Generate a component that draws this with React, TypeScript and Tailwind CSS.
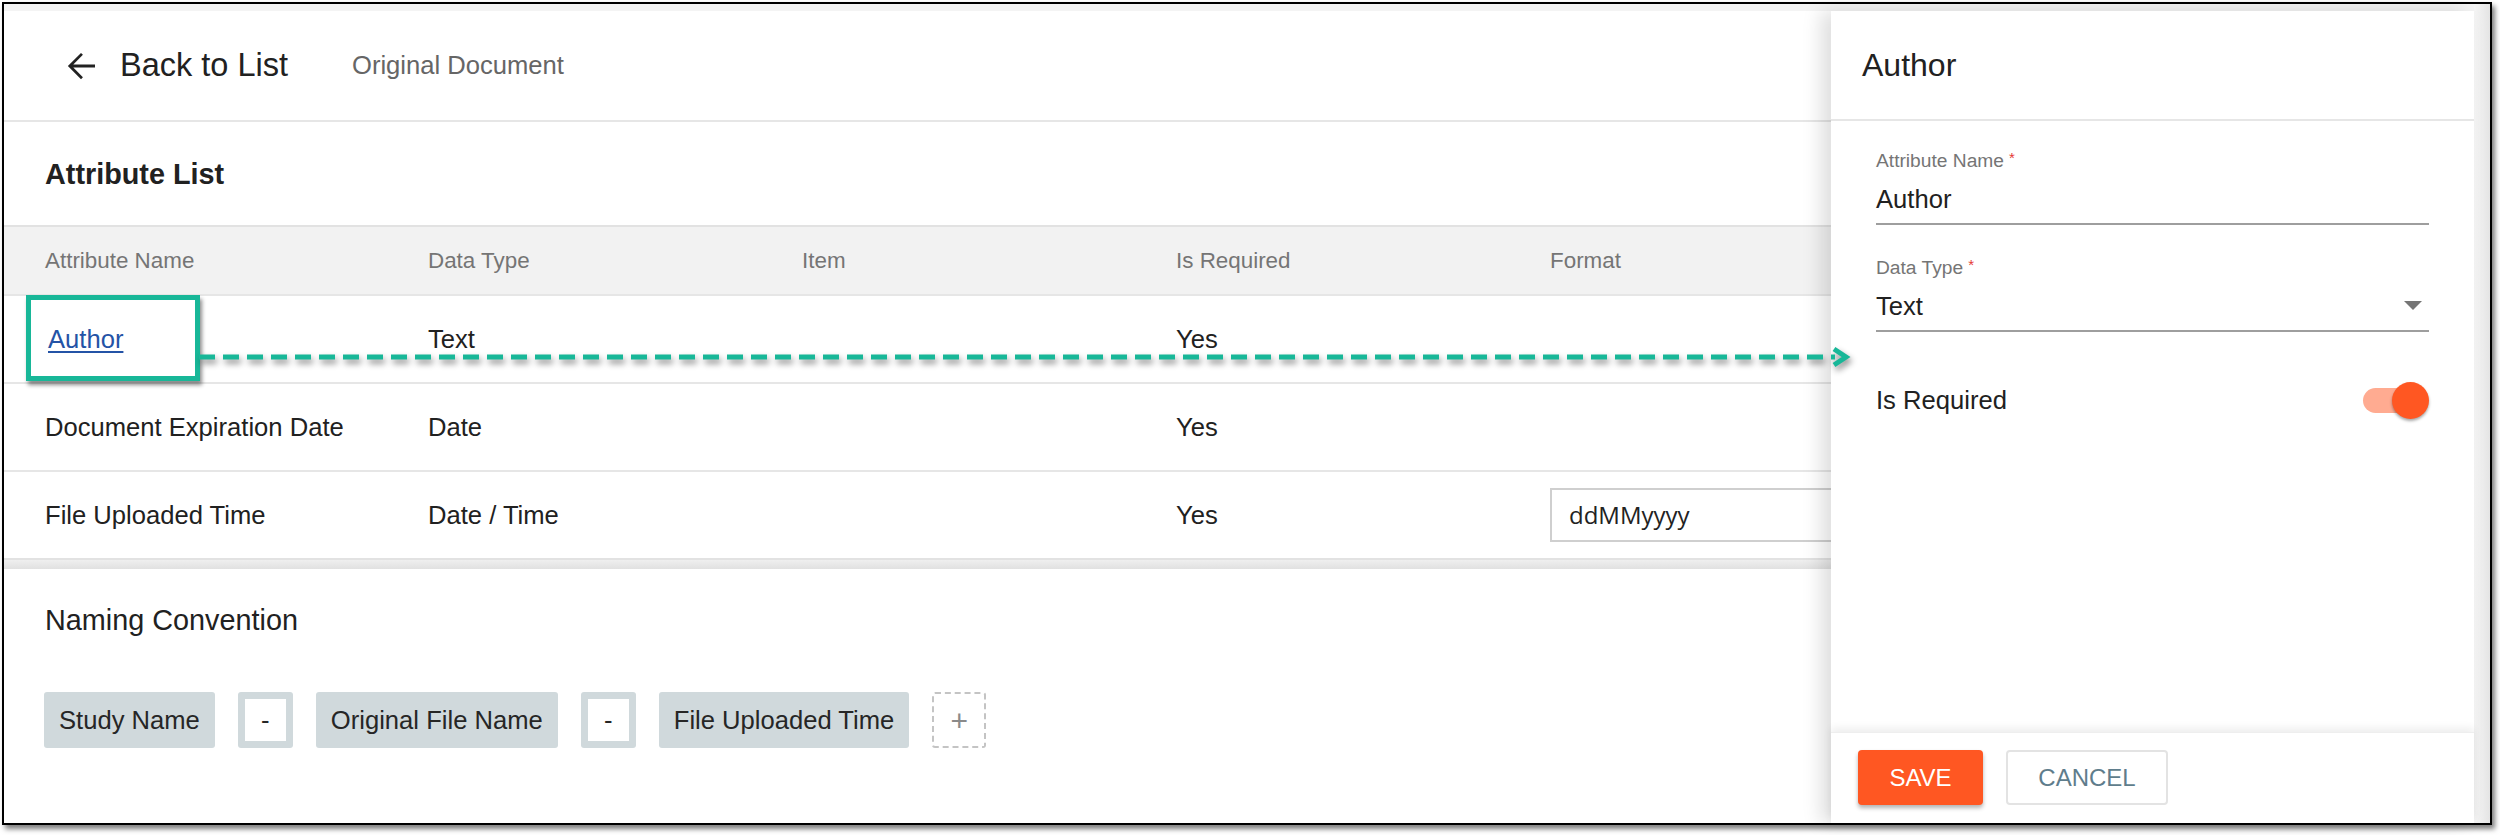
import React from 'react';

const FONT = { fontFamily: '"Liberation Sans", Arial, Helvetica, sans-serif' };

const columns = ['Attribute Name', 'Data Type', 'Item', 'Is Required', 'Format'];

const rows = [
  { name: 'Author', type: 'Text', required: 'Yes', link: true },
  { name: 'Document Expiration Date', type: 'Date', required: 'Yes' },
  { name: 'File Uploaded Time', type: 'Date / Time', required: 'Yes', format: 'ddMMyyyy' },
];

const colWidths = ['w-[383px]', 'w-[374px]', 'w-[374px]', 'w-[374px]'];

function ArrowBack() {
  return (
    <svg width="42" height="42" viewBox="0 0 24 24" fill="#222">
      <path d="M20 11.1H7.6l5.5-5.5L12 4.5 4.5 12l7.5 7.5 1.1-1.1-5.5-5.5H20z" />
    </svg>
  );
}

function Chip({ label }: { label: string }) {
  return (
    <div className="h-[56px] px-[15px] flex items-center bg-[#d0d9dc] rounded-[3px] text-[25.6px] text-[#262626]">
      {label}
    </div>
  );
}

function Sep() {
  return (
    <div className="h-[56px] w-[55px] p-[7px] bg-[#d0d9dc] rounded-[3px]">
      <div className="h-full w-full bg-white flex items-center justify-center text-[25.6px] text-[#262626]">-</div>
    </div>
  );
}

function Field({ label, value, select }: { label: string; value: string; select?: boolean }) {
  return (
    <div>
      <div className="h-[24px] flex items-center text-[19.2px] text-[#757575]">
        {label}
        <span className="text-[#e53935] text-[15px] ml-[5px] -mt-[6px]">*</span>
      </div>
      <div className="h-[50px] flex items-center justify-between border-b-2 border-[#9e9e9e] text-[25.6px] text-[#212121] box-content">
        <span className="mt-[2px]">{value}</span>
        {select && (
          <svg width="18" height="9" viewBox="0 0 18 9" className="mr-[7px]">
            <path d="M0 0h18L9 9z" fill="#757575" />
          </svg>
        )}
      </div>
    </div>
  );
}

export default function App() {
  return (
    <div className="w-[2500px] h-[835px] bg-white relative overflow-hidden" style={FONT}>
      {/* window frame */}
      <div className="ml-[2px] mt-[2px] w-[2490px] h-[823px] border-2 border-black shadow-[3px_4px_5px_rgba(0,0,0,0.5)] flex bg-white">
        <div className="flex-1 flex flex-col">
          <div className="h-[7px] bg-[#f4f4f4]" />
          <div className="relative flex-1">
            {/* header */}
            <div className="h-[111px] border-b-2 border-[#e6e6e6] flex items-center">
              <div className="ml-[56px] flex items-center">
                <ArrowBack />
              </div>
              <span className="ml-[18px] text-[32.5px] text-[#212121]">Back to List</span>
              <span className="ml-[64px] text-[25.6px] text-[#666]">Original Document</span>
            </div>

            {/* attribute list */}
            <div className="h-[103px] flex items-center pl-[41px] pt-[2px] text-[28.8px] font-bold text-[#212121]">
              Attribute List
            </div>
            <div className="h-[69px] border-t-2 border-[#e2e2e2] bg-[#f2f2f2] flex items-center pl-[41px] text-[22.4px] text-[#757575]">
              {columns.map((c, i) => (
                <div key={c} className={colWidths[i] ?? 'flex-1'}>{c}</div>
              ))}
            </div>
            {rows.map((r) => (
              <div key={r.name} className="h-[88px] border-t-2 border-[#e6e6e6] flex items-center pl-[41px] text-[25.6px] text-[#212121]">
                <div className={colWidths[0]}>
                  {r.link ? <span className="text-[#2453a6] underline underline-offset-[3px] ml-[3px]">{r.name}</span> : r.name}
                </div>
                <div className={colWidths[1]}>{r.type}</div>
                <div className={colWidths[2]} />
                <div className={colWidths[3]}>{r.required}</div>
                <div className="flex-1">
                  {r.format && (
                    <div
                      className="w-[420px] h-[54px] border-2 border-[#cfcfcf] flex items-center pl-[17px] text-[24px] text-[#222]"
                      style={{ fontFamily: '"Open Sans", "Noto Sans", sans-serif' }}
                    >
                      {r.format}
                    </div>
                  )}
                </div>
              </div>
            ))}
            <div className="border-t-2 border-[#e2e2e2] h-[2px]" />
            <div className="h-[9px] bg-gradient-to-b from-[#efefef] to-[#e1e1e1]" />

            {/* naming convention */}
            <div className="h-[104px] flex items-center pl-[41px] text-[28.8px] text-[#212121]">Naming Convention</div>
            <div className="mt-[19px] pl-[40px] flex items-center gap-[23px]">
              <Chip label="Study Name" />
              <Sep />
              <Chip label="Original File Name" />
              <Sep />
              <Chip label="File Uploaded Time" />
              <div className="h-[56px] w-[54px] border-2 border-dashed border-[#c4c4c4] rounded-[3px] flex items-center justify-center text-[30px] text-[#8a8a8a] font-light">
                +
              </div>
            </div>

            {/* highlight box */}
            <div className="absolute left-[22px] top-[284px] w-[174px] h-[86px] border-[5px] border-[#18b798] shadow-[2px_4px_4px_rgba(0,0,0,0.45)] z-20" />

            {/* drawer */}
            <div className="absolute top-0 right-0 bottom-0 w-[643px] bg-white shadow-[-10px_0_18px_rgba(0,0,0,0.13)] flex flex-col z-10">
              <div className="h-[110px] border-b-2 border-[#e6e6e6] flex items-center pl-[31px] text-[32px] text-[#212121]">
                Author
              </div>
              <div className="px-[45px] pt-[28px]">
                <Field label="Attribute Name" value="Author" />
                <div className="mt-[31px]">
                  <Field label="Data Type" value="Text" select />
                </div>
                <div className="mt-[44px] h-[48px] flex items-center justify-between">
                  <span className="text-[25.6px] text-[#212121]">Is Required</span>
                  <div className="relative w-[66px] h-[37px] flex items-center">
                    <div className="w-[58px] h-[25px] rounded-full bg-[#ffab91]" />
                    <div className="absolute right-0 top-0 w-[37px] h-[37px] rounded-full bg-[#ff5722] shadow-[0_2px_3px_rgba(0,0,0,0.35)]" />
                  </div>
                </div>
              </div>
              <div className="flex-1" />
              <div className="h-[91px] shadow-[0_-4px_8px_rgba(0,0,0,0.07)] border-t border-[#eee] flex items-start pt-[17px] pl-[27px] gap-[23px]">
                <button className="h-[55px] w-[125px] rounded-[4px] bg-[#ff5722] text-white text-[24px] shadow-[0_3px_4px_rgba(0,0,0,0.3)]">
                  SAVE
                </button>
                <button className="h-[55px] w-[162px] rounded-[4px] bg-white border-2 border-[#e3e3e3] text-[#5f7d8c] text-[24px]">
                  CANCEL
                </button>
              </div>
            </div>

            {/* dashed arrow */}
            <svg
              className="absolute left-[195px] top-[334px] z-30"
              width="1660"
              height="24"
              style={{ filter: 'drop-shadow(2px 4px 3px rgba(0,0,0,0.45))' }}
            >
              <line x1="0" y1="12" x2="1636" y2="12" stroke="#18b798" strokeWidth="5" strokeDasharray="16 8" />
              <polyline points="1635,4 1647,12 1635,20" fill="none" stroke="#18b798" strokeWidth="5" />
            </svg>
          </div>
        </div>
        {/* right scroll strip */}
        <div className="w-[16px] bg-gradient-to-r from-[#f6f6f6] to-[#e4e4e4]" />
      </div>
    </div>
  );
}
